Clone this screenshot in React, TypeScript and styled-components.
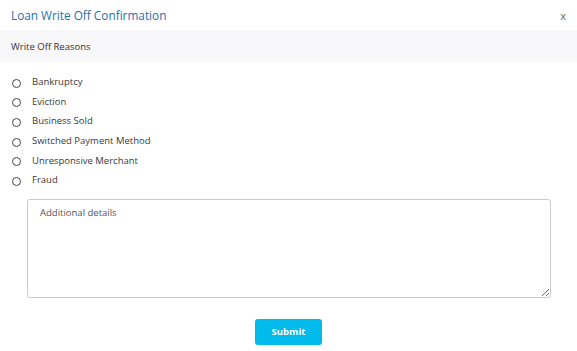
import React from "react";
import styled, { createGlobalStyle } from "styled-components";

const GlobalStyle = createGlobalStyle`
  html, body {
    margin: 0;
    padding: 0;
    background: #ffffff;
    font-family: "Open Sans", "DejaVu Sans", sans-serif;
  }
`;

const Modal = styled.div`
  width: 577px;
  height: 351px;
  background: #fff;
  display: flex;
  flex-direction: column;
`;

const Header = styled.div`
  height: 30px;
  display: flex;
  align-items: center;
  justify-content: space-between;
  padding: 0 11px;
`;

const Title = styled.h1`
  margin: 0;
  font-size: 11.8px;
  font-weight: 400;
  color: #1f6fb2;
`;

const Close = styled.button`
  border: none;
  background: none;
  padding: 0;
  font-size: 11px;
  color: #666;
  font-family: inherit;
  cursor: pointer;
`;

const Section = styled.div`
  height: 32px;
  background: #f8f8fa;
  display: flex;
  align-items: center;
  padding: 0 11px;
  font-size: 9.5px;
  color: #333;
`;

const Reasons = styled.div`
  display: flex;
  flex-direction: column;
  padding: 10px 0 0 11px;
`;

const Reason = styled.label`
  display: flex;
  align-items: center;
  height: 19.6px;
  font-size: 9.5px;
  color: #3a3a3a;
`;

const Radio = styled.span`
  width: 7px;
  height: 7px;
  border: 1px solid #444;
  border-radius: 50%;
  margin: 3px 11px 0 1px;
`;

const Details = styled.textarea`
  margin: 9px 0 0 27px;
  width: 524px;
  height: 99px;
  box-sizing: border-box;
  border: 1px solid #ccc;
  border-radius: 3px;
  padding: 6px 12px;
  font-family: inherit;
  font-size: 9.5px;
  color: #333;
  &::placeholder {
    color: #555;
  }
`;

const Footer = styled.div`
  display: flex;
  justify-content: center;
  padding-top: 21px;
`;

const Submit = styled.button`
  width: 67px;
  height: 26px;
  border: none;
  border-radius: 3px;
  background: #00bbec;
  color: #fff;
  font-family: inherit;
  font-weight: 700;
  font-size: 9.5px;
`;

const reasons = [
  "Bankruptcy",
  "Eviction",
  "Business Sold",
  "Switched Payment Method",
  "Unresponsive Merchant",
  "Fraud",
];

export default function App() {
  return (
    <>
      <GlobalStyle />
      <Modal>
        <Header>
          <Title>Loan Write Off Confirmation</Title>
          <Close>x</Close>
        </Header>
        <Section>Write Off Reasons</Section>
        <Reasons>
          {reasons.map((r) => (
            <Reason key={r}>
              <Radio />
              {r}
            </Reason>
          ))}
        </Reasons>
        <Details placeholder="Additional details" />
        <Footer>
          <Submit>Submit</Submit>
        </Footer>
      </Modal>
    </>
  );
}
